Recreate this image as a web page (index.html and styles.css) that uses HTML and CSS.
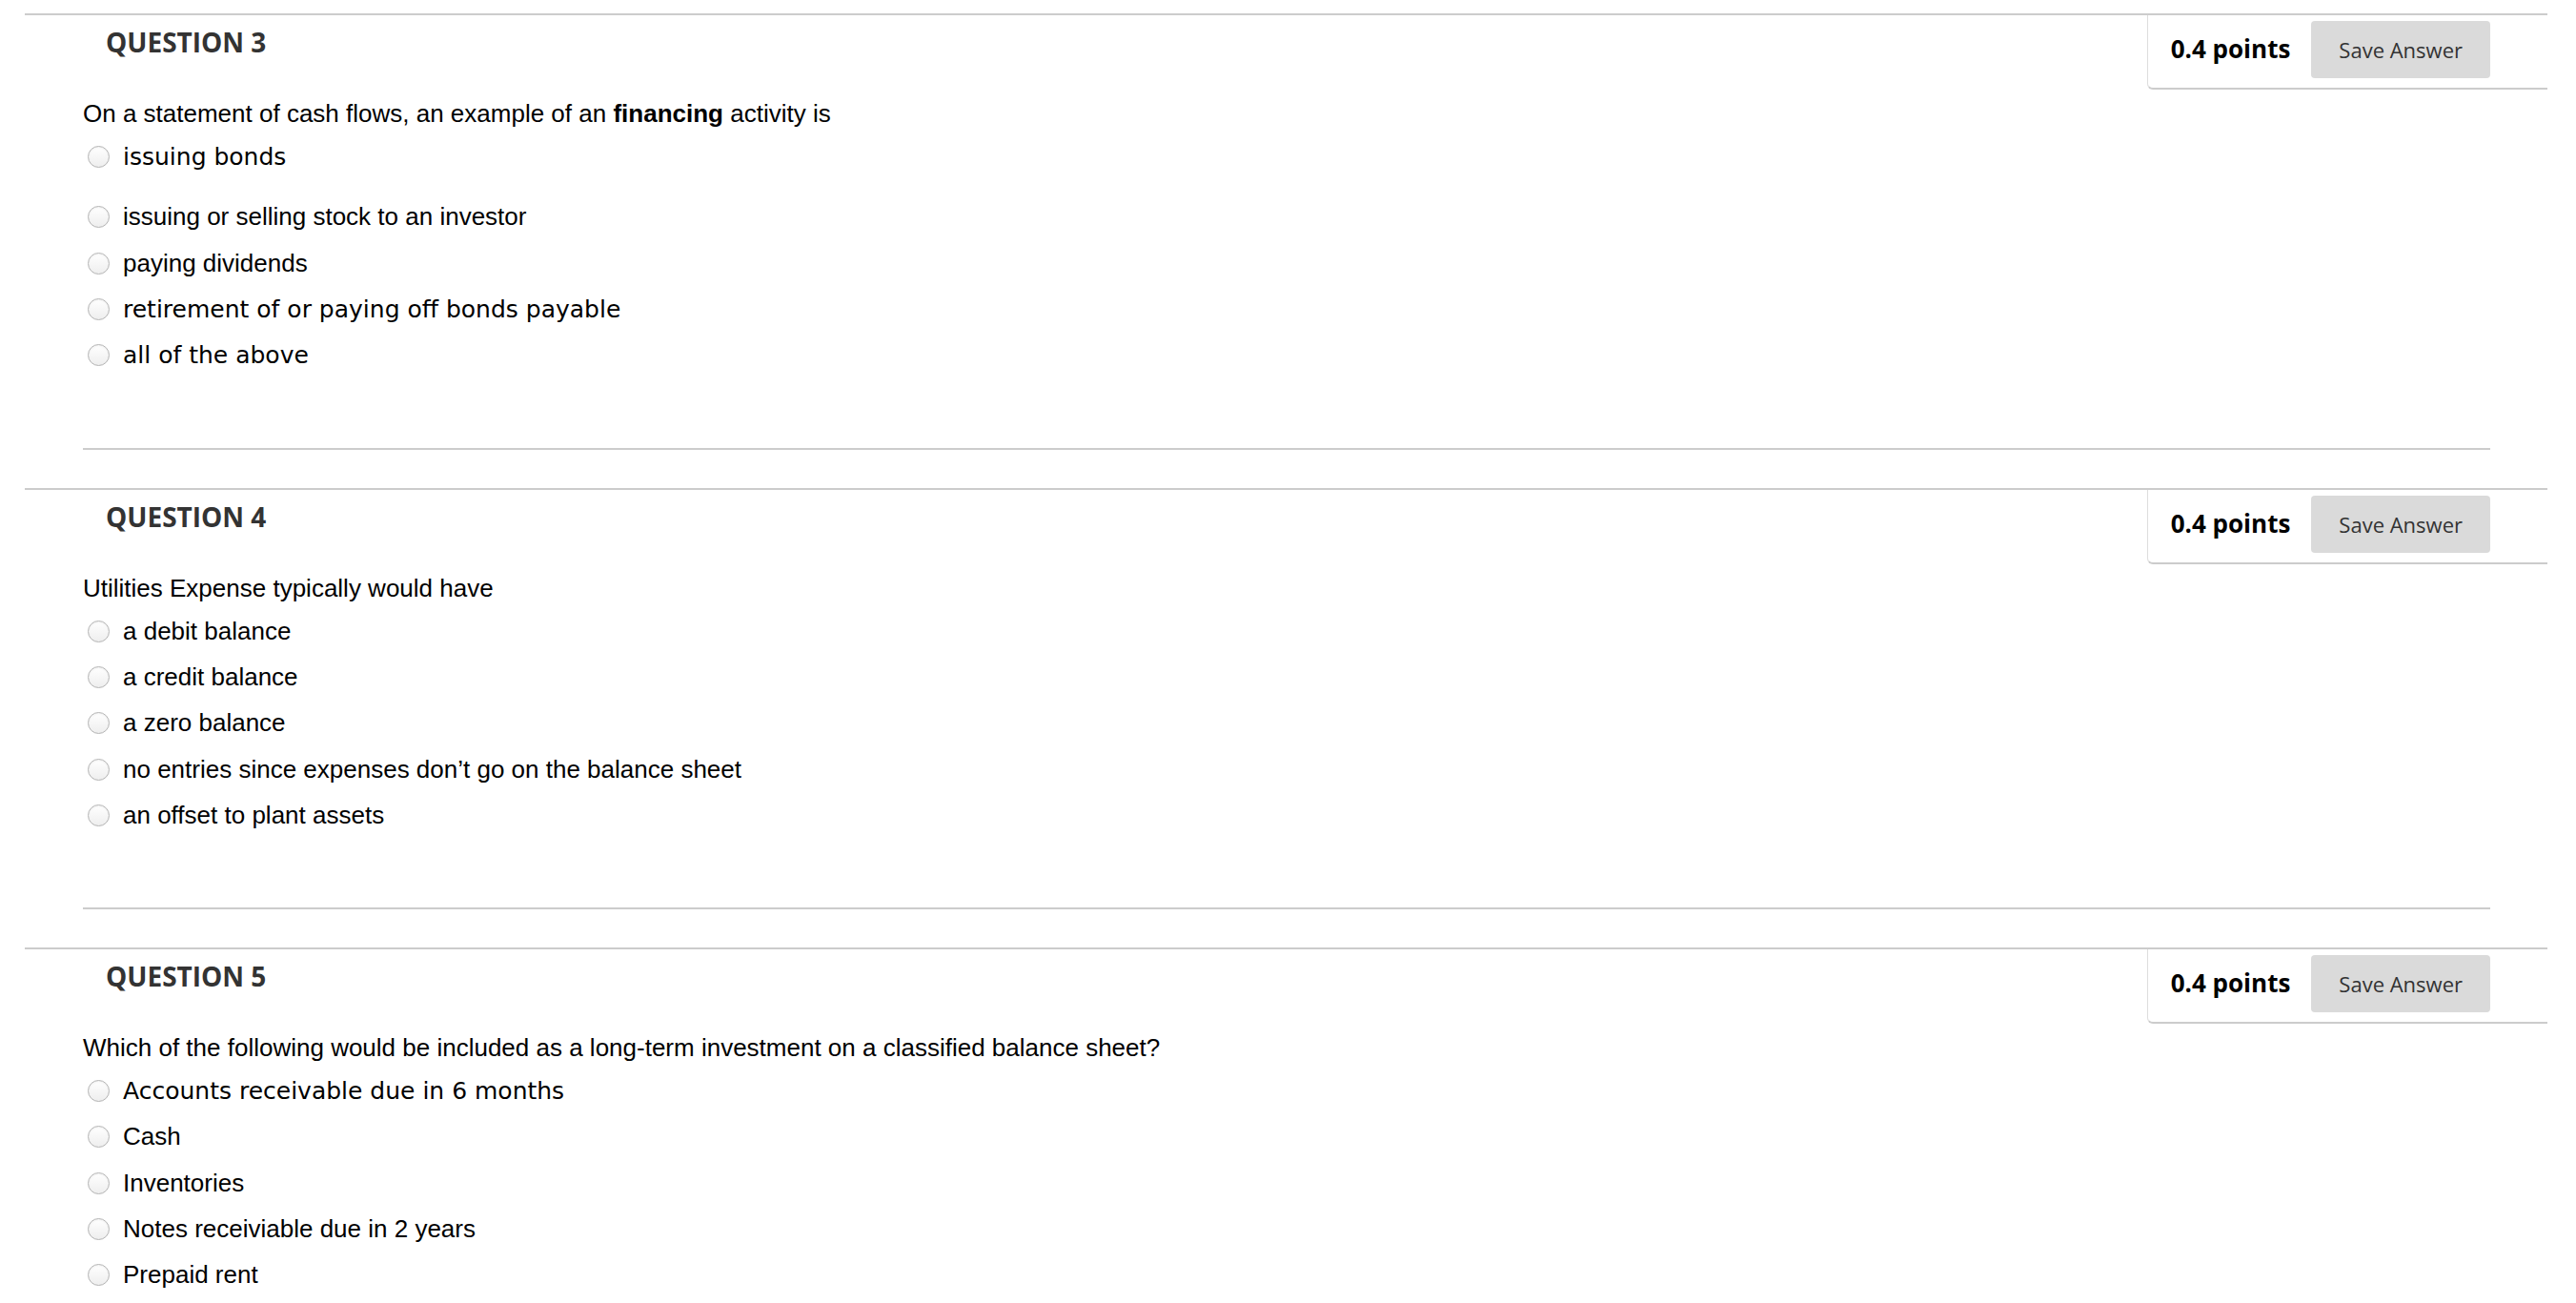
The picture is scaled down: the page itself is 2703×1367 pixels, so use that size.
FILE: index.html
```html
<!DOCTYPE html>
<html lang="en">
<head>
<meta charset="utf-8">
<title>Questions</title>
<link rel="stylesheet" href="styles.css">
</head>
<body>
<div class="page">

  <section class="question">
    <div class="q-head">
      <h3 class="q-title">QUESTION 3</h3>
      <div class="points-box">
        <span class="points">0.4 points</span>
        <button class="save-btn" type="button">Save Answer</button>
      </div>
    </div>
    <div class="q-body">
      <p class="stem">On a statement of cash flows, an example of an <b>financing</b> activity is</p>
      <label class="opt opt-gap"><input type="radio" name="q3" class="radio"><span class="alt-font">issuing bonds</span></label>
      <label class="opt"><input type="radio" name="q3" class="radio"><span>issuing or selling stock to an investor</span></label>
      <label class="opt"><input type="radio" name="q3" class="radio"><span>paying dividends</span></label>
      <label class="opt"><input type="radio" name="q3" class="radio"><span class="alt-font">retirement of or paying off bonds payable</span></label>
      <label class="opt"><input type="radio" name="q3" class="radio"><span class="alt-font">all of the above</span></label>
      <hr class="sep">
    </div>
  </section>

  <section class="question">
    <div class="q-head">
      <h3 class="q-title">QUESTION 4</h3>
      <div class="points-box">
        <span class="points">0.4 points</span>
        <button class="save-btn" type="button">Save Answer</button>
      </div>
    </div>
    <div class="q-body">
      <p class="stem">Utilities Expense typically would have</p>
      <label class="opt"><input type="radio" name="q4" class="radio"><span>a debit balance</span></label>
      <label class="opt"><input type="radio" name="q4" class="radio"><span>a credit balance</span></label>
      <label class="opt"><input type="radio" name="q4" class="radio"><span>a zero balance</span></label>
      <label class="opt"><input type="radio" name="q4" class="radio"><span>no entries since expenses don’t go on the balance sheet</span></label>
      <label class="opt"><input type="radio" name="q4" class="radio"><span>an offset to plant assets</span></label>
      <hr class="sep">
    </div>
  </section>

  <section class="question">
    <div class="q-head">
      <h3 class="q-title">QUESTION 5</h3>
      <div class="points-box">
        <span class="points">0.4 points</span>
        <button class="save-btn" type="button">Save Answer</button>
      </div>
    </div>
    <div class="q-body">
      <p class="stem">Which of the following would be included as a long-term investment on a classified balance sheet?</p>
      <label class="opt"><input type="radio" name="q5" class="radio"><span class="alt-font">Accounts receivable due in 6 months</span></label>
      <label class="opt"><input type="radio" name="q5" class="radio"><span>Cash</span></label>
      <label class="opt"><input type="radio" name="q5" class="radio"><span>Inventories</span></label>
      <label class="opt"><input type="radio" name="q5" class="radio"><span>Notes receiviable due in 2 years</span></label>
      <label class="opt"><input type="radio" name="q5" class="radio"><span>Prepaid rent</span></label>
    </div>
  </section>

</div>
</body>
</html>
```

FILE: styles.css
```css
html, body {
  margin: 0;
  padding: 0;
  background: #ffffff;
}

.page {
  padding-top: 14px;
}

.question {
  margin-left: 26px;
  width: 2647px;
  border-top: 2px solid #cccccc;
  margin-bottom: 40px;
}

.q-head {
  display: flex;
  justify-content: space-between;
  align-items: flex-start;
}

.q-title {
  margin: 0;
  padding: 9px 0 0 85px;
  font-family: "Open Sans", sans-serif;
  font-weight: 700;
  font-size: 28px;
  line-height: 38px;
  color: #333333;
}

.points-box {
  display: flex;
  align-items: center;
  gap: 22px;
  padding: 6px 60px 10px 24px;
  border-left: 1px solid #dddddd;
  border-bottom: 2px solid #cccccc;
  border-bottom-left-radius: 6px;
}

.points {
  font-family: "Open Sans", sans-serif;
  font-weight: 700;
  font-size: 26px;
  color: #000000;
  margin-top: -2px;
}

.save-btn {
  height: 60px;
  padding: 0 29px;
  border: none;
  border-radius: 4px;
  background: #dadada;
  font-family: "Open Sans", sans-serif;
  font-size: 22px;
  color: #333333;
}

.q-body {
  padding: 0 60px 0 61px;
}

.stem {
  margin: 10px 0 6px;
  font-family: "Liberation Sans", Arial, sans-serif;
  font-size: 26px;
  line-height: 30px;
  color: #000000;
}

.opt {
  display: flex;
  align-items: center;
  height: 48.3px;
  font-family: "Liberation Sans", Arial, sans-serif;
  font-size: 26px;
  color: #000000;
}

.opt-gap {
  margin-bottom: 15.5px;
}

.alt-font {
  font-family: "DejaVu Sans", sans-serif;
  font-size: 25px;
}

.radio {
  -webkit-appearance: none;
  appearance: none;
  box-sizing: border-box;
  width: 23px;
  height: 23px;
  margin: 0 14px 0 5px;
  border: 1.5px solid #b4b4b4;
  border-radius: 50%;
  background: linear-gradient(#ffffff, #eeeeee);
  box-shadow: inset 0 1px 2px rgba(0, 0, 0, 0.06);
  flex: none;
}

.sep {
  margin: 73px 0 0;
  border: none;
  border-top: 2px solid #cccccc;
  height: 0;
}
```
